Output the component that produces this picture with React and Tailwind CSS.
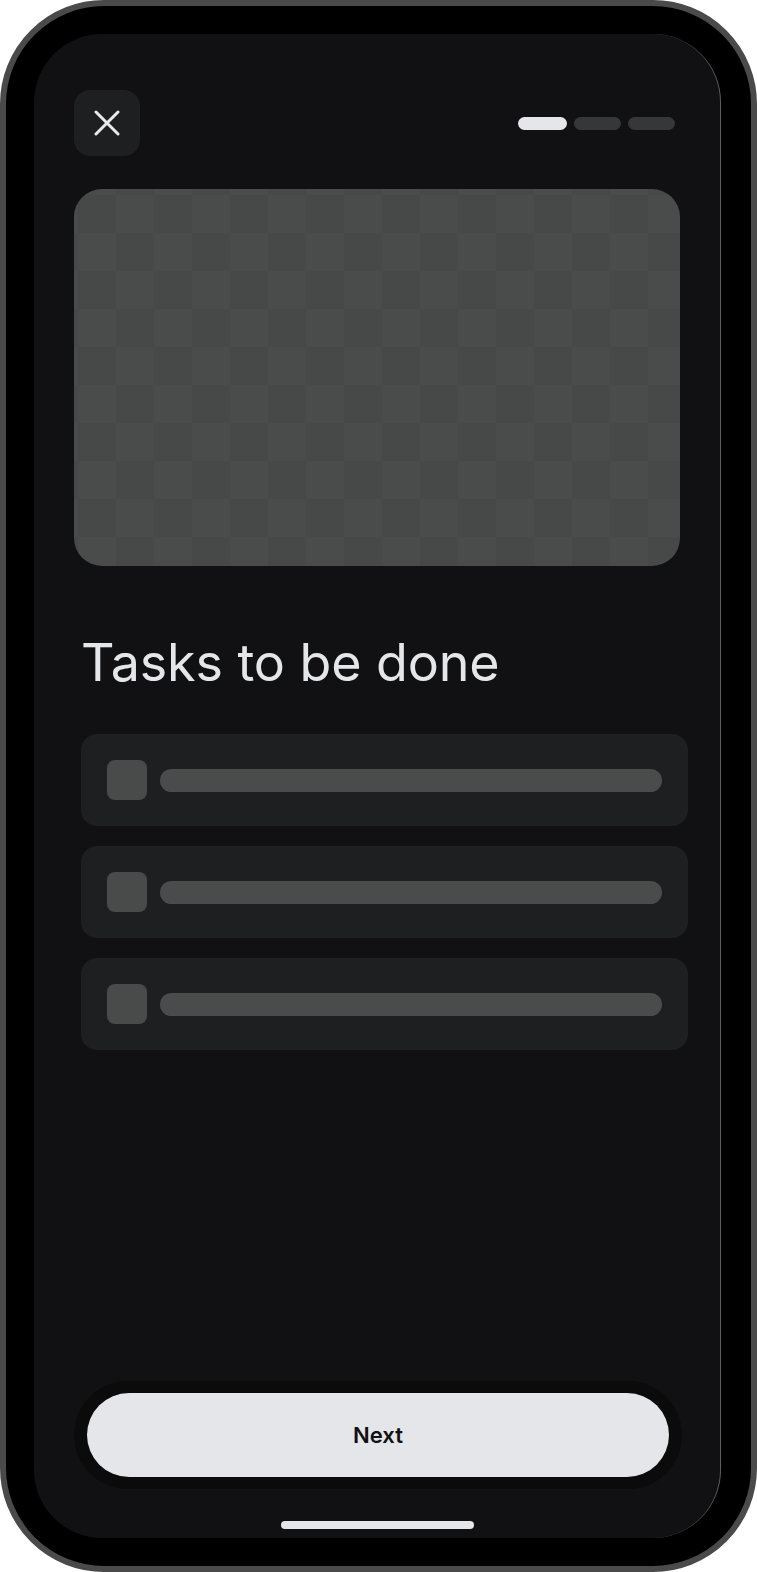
import React from 'react';

const tasks = [1, 2, 3];

export default function App() {
  return (
    <div className="w-[757px] h-[1572px] bg-white font-['Inter',sans-serif]">
      {/* phone frame */}
      <div className="w-full h-full rounded-[104px] border-[6px] border-[#4a4a4a] bg-black pl-[28px] pt-[28px] pr-[30px] pb-[28px]">
        {/* screen */}
        <div className="h-full w-full flex flex-col rounded-[68px] bg-[#111113] border-r border-[#5e5e5e] overflow-hidden">
          {/* header */}
          <div className="flex items-center justify-between pt-[56px] pl-[40px] pr-[45px]">
            <button className="w-[66px] h-[66px] rounded-[16px] bg-[#1e1f21] flex items-center justify-center">
              <svg width="26" height="26" viewBox="0 0 26 26" fill="none" stroke="#e8e9ec" strokeWidth="3" strokeLinecap="round">
                <path d="M2 2L24 24M24 2L2 24" />
              </svg>
            </button>
            <div className="flex items-center gap-[7px]">
              <div className="w-[49px] h-[13px] rounded-full bg-[#e5e6ea]" />
              <div className="w-[47px] h-[13px] rounded-full bg-[#363739]" />
              <div className="w-[47px] h-[13px] rounded-full bg-[#363739]" />
            </div>
          </div>

          {/* image placeholder */}
          <div className="mt-[33px] ml-[40px] w-[606px] h-[377px] rounded-[28px] bg-[#4a4c4b] bg-[conic-gradient(transparent_25%,#474948_0_50%,transparent_0_75%,#474948_0)] bg-size-[76px_76px] bg-position-[4px_6px]" />

          <h1 className="mt-[71px] ml-[47px] text-[52px] leading-none font-normal text-[#e5e6ea] tracking-[-0.1px]">
            Tasks to be done
          </h1>

          {/* task list */}
          <div className="mt-[45px] ml-[47px] w-[607px] flex flex-col gap-[20px]">
            {tasks.map((t) => (
              <div key={t} className="h-[92px] rounded-[16px] bg-[#1e1f21] flex items-center gap-[13px] px-[26px]">
                <div className="w-[40px] h-[40px] rounded-[8px] bg-[#494b4a] shrink-0" />
                <div className="flex-1 h-[23px] rounded-full bg-[#4a4c4b]" />
              </div>
            ))}
          </div>

          {/* bottom action */}
          <div className="mt-auto ml-[40px] w-[608px] rounded-full bg-[#0b0b0c] px-[13px] py-[12px]">
            <button className="w-full h-[84px] rounded-full bg-[#e5e6ea] text-[#111113] text-[22px] font-semibold">
              Next
            </button>
          </div>
          <div className="mt-[32px] mb-[9px] mx-auto w-[193px] h-[8px] rounded-full bg-[#e5e6ea]" />
        </div>
      </div>
    </div>
  );
}
